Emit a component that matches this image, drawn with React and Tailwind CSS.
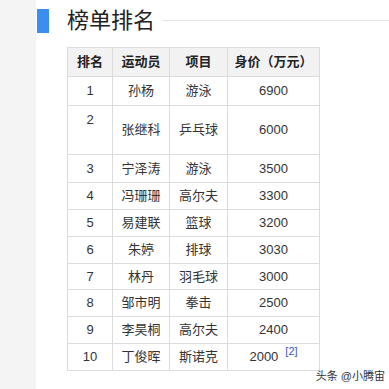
import React from "react";

const rows = [
  { rank: "1", name: "孙杨", sport: "游泳", value: "6900", h: "h-[29px]" },
  { rank: "2", name: "张继科", sport: "乒乓球", value: "6000", h: "h-[49px]", top: true },
  { rank: "3", name: "宁泽涛", sport: "游泳", value: "3500", h: "h-[28px]" },
  { rank: "4", name: "冯珊珊", sport: "高尔夫", value: "3300", h: "h-[27px]" },
  { rank: "5", name: "易建联", sport: "篮球", value: "3200", h: "h-[27px]" },
  { rank: "6", name: "朱婷", sport: "排球", value: "3030", h: "h-[27px]" },
  { rank: "7", name: "林丹", sport: "羽毛球", value: "3000", h: "h-[26px]" },
  { rank: "8", name: "邹市明", sport: "拳击", value: "2500", h: "h-[27px]" },
  { rank: "9", name: "李昊桐", sport: "高尔夫", value: "2400", h: "h-[27px]" },
  { rank: "10", name: "丁俊晖", sport: "斯诺克", value: "2000", h: "h-[27px]", note: "[2]" },
];

const cell = "border border-[#dcdcdc] text-center p-0";

const App = () => {
  return (
    <div
      className="relative flex w-[389px] h-[389px] overflow-hidden bg-white text-[#333]"
      style={{ fontFamily: '"Liberation Sans", "Noto Sans CJK SC", sans-serif' }}
    >
      {/* grey strip on the left */}
      <div className="w-[36px] shrink-0 bg-[#f4f4f4]" />

      <div className="flex-1 pt-[9px]">
        {/* heading */}
        <div className="flex items-center h-[24px]">
          <div className="ml-[1px] w-[12px] h-[24px] bg-[#3b8ef0]" />
          <h1 className="ml-[18px] text-[22px] leading-none text-[#222]">榜单排名</h1>
          <div className="flex-1 ml-[7px] mt-[-2px] h-px bg-[#e6e6e6]" />
        </div>

        {/* ranking table */}
        <table className="mt-[14px] ml-[31px] border-collapse table-fixed text-[13px]">
          <thead>
            <tr className="h-[29px] bg-[#f2f2f2] text-[#222]">
              <th className={`${cell} w-[45px] font-bold`}>排名</th>
              <th className={`${cell} w-[57px] font-bold`}>运动员</th>
              <th className={`${cell} w-[58px] font-bold`}>项目</th>
              <th className={`${cell} w-[92px] font-bold`}>身价（万元）</th>
            </tr>
          </thead>
          <tbody>
            {rows.map((row) => (
              <tr key={row.rank} className={row.h}>
                <td className={`${cell} ${row.top ? "align-top pt-[4px]" : ""}`}>{row.rank}</td>
                <td className={cell}>{row.name}</td>
                <td className={cell}>{row.sport}</td>
                <td className={cell}>
                  {row.value}
                  {row.note && (
                    <sup className="ml-[7px] text-[11px] text-[#3a57b8] top-[-6px]">{row.note}</sup>
                  )}
                </td>
              </tr>
            ))}
          </tbody>
        </table>
      </div>

      {/* watermark */}
      <div
        className="absolute right-[4px] bottom-[7px] text-[11px] leading-none text-[#333]"
        style={{ textShadow: "0 0 2px #fff" }}
      >
        头条 @小腾宙
      </div>
    </div>
  );
};

export default App;
